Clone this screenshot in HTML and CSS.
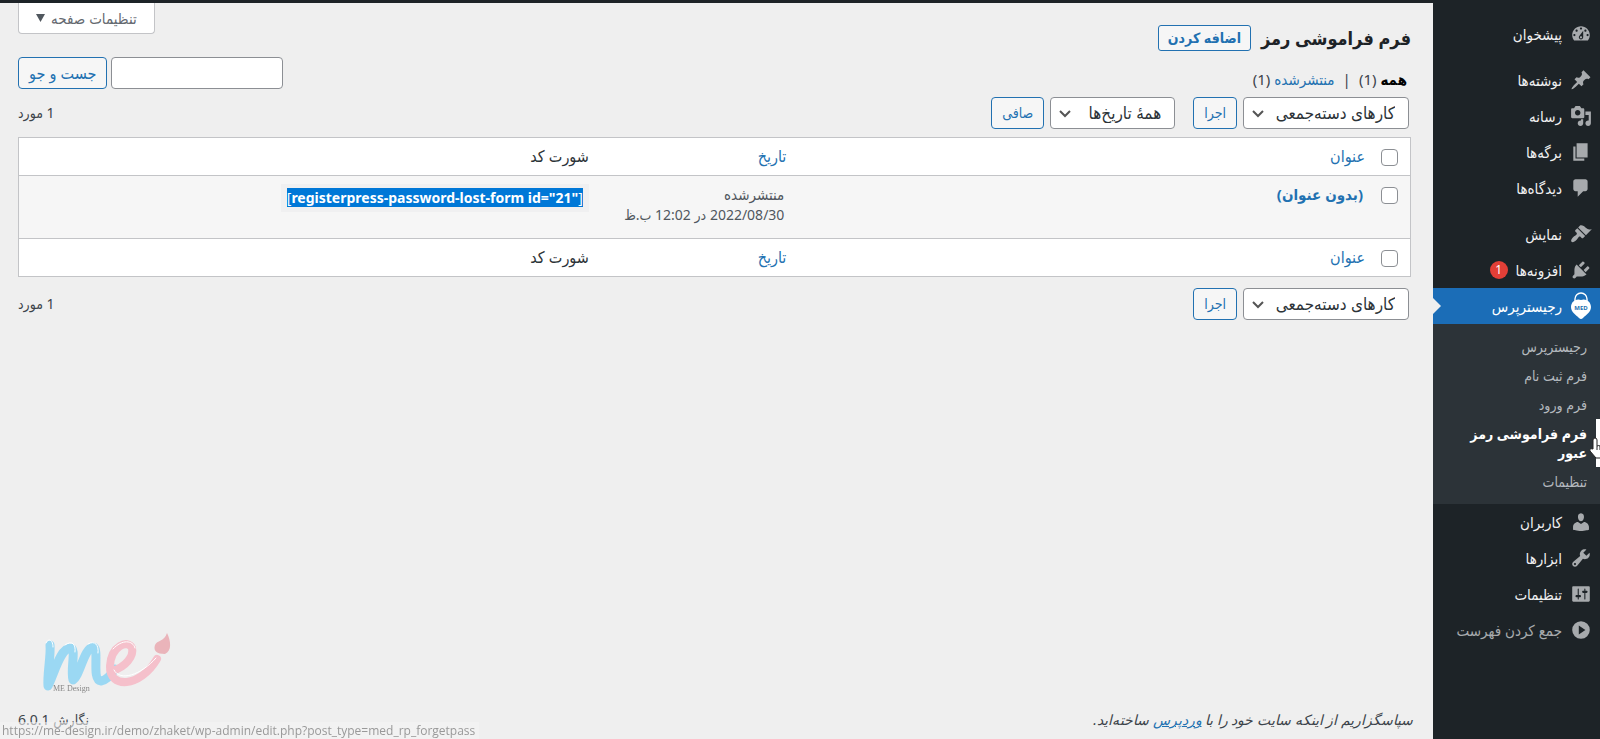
FILE: index.html
```html
<!DOCTYPE html>
<html lang="fa" dir="rtl">
<head>
<meta charset="utf-8">
<title>فرم فراموشی رمز</title>
<link rel="stylesheet" href="styles.css">
</head>
<body>
<div class="topbar"></div>
<div class="shell">
  <nav class="menu">
    <a class="item" href="#"><svg class="icon" viewBox="0 0 20 20"><path d="M3.76 16h12.48c1.1-1.37 1.76-3.11 1.76-5 0-4.42-3.58-8-8-8s-8 3.58-8 8c0 1.89.66 3.63 1.76 5zM10 4c.55 0 1 .45 1 1s-.45 1-1 1-1-.45-1-1 .45-1 1-1zM6 6c.55 0 1 .45 1 1s-.45 1-1 1-1-.45-1-1 .45-1 1-1zm8 0c.55 0 1 .45 1 1s-.45 1-1 1-1-.45-1-1 .45-1 1-1zm-5.37 5.55L12 7v6c0 1.1-.9 2-2 2s-2-.9-2-2c0-.57.24-1.08.63-1.45zM4 10c.55 0 1 .45 1 1s-.45 1-1 1-1-.45-1-1 .45-1 1-1zm12 0c.55 0 1 .45 1 1s-.45 1-1 1-1-.45-1-1 .45-1 1-1zm-5 3c0-.55-.45-1-1-1s-1 .45-1 1 .45 1 1 1 1-.45 1-1z"/></svg>پیشخوان</a>
    <div class="gap"></div>
    <a class="item" href="#"><svg class="icon" viewBox="0 0 20 20"><path d="M10.44 3.02l1.82-1.82 6.36 6.35-1.83 1.82c-1.05-.68-2.48-.57-3.41.36l-.75.75c-.92.93-1.04 2.35-.35 3.41l-1.83 1.82-2.41-2.41-2.8 2.79c-.42.42-3.38 2.71-3.8 2.29s1.86-3.39 2.28-3.81l2.79-2.79L4.1 9.36l1.83-1.82c1.05.69 2.48.57 3.4-.36l.75-.75c.93-.92 1.05-2.35.36-3.41z"/></svg>نوشته‌ها</a>
    <a class="item" href="#"><svg class="icon" viewBox="0 0 20 20"><path d="M13 11V4c0-.55-.45-1-1-1h-1.67L9 1H5L3.67 3H2c-.55 0-1 .45-1 1v7c0 .55.45 1 1 1h10c.55 0 1-.45 1-1zM7 4.5c1.38 0 2.5 1.12 2.5 2.5S8.38 9.5 7 9.5 4.5 8.38 4.5 7 5.62 4.5 7 4.5zM14 6h5v10.5c0 1.38-1.12 2.5-2.5 2.5S14 17.88 14 16.5s1.12-2.5 2.5-2.5c.17 0 .34.02.5.05V9h-3V6zm-4 8.05V13h2v3.5c0 1.38-1.12 2.5-2.5 2.5S7 17.88 7 16.5 8.12 14 9.5 14c.17 0 .34.02.5.05z"/></svg>رسانه</a>
    <a class="item" href="#"><svg class="icon" viewBox="0 0 20 20"><path d="M6 15V2h10v13H6zm-1 1h8v2H3V5h2v11z"/></svg>برگه‌ها</a>
    <a class="item" href="#"><svg class="icon" viewBox="0 0 20 20"><path d="M5 2h9c1.1 0 2 .9 2 2v7c0 1.1-.9 2-2 2h-2l-5 5v-5H5c-1.1 0-2-.9-2-2V4c0-1.1.9-2 2-2z"/></svg>دیدگاه‌ها</a>
    <div class="gap"></div>
    <a class="item" href="#"><svg class="icon" viewBox="0 0 20 20"><path d="M14.48 11.06L7.41 3.99l1.5-1.5c.5-.56 2.3-.47 3.51.32 1.21.8 1.43 1.28 2.91 2.1 1.18.64 2.45 1.26 4.45.85zm-.71.71L6.7 4.7 4.93 6.47c-.39.39-.39 1.02 0 1.41l1.06 1.06c.39.39.39 1.03 0 1.42-.6.6-1.43 1.11-2.21 1.69-.35.26-.7.53-1.01.84C1.43 14.23.4 16.08 1.4 17.07c.99 1 2.84-.03 4.18-1.36.31-.31.58-.66.85-1.02.57-.78 1.08-1.61 1.69-2.21.39-.39 1.02-.39 1.41 0l1.06 1.06c.39.39 1.02.39 1.41 0z"/></svg>نمایش</a>
    <a class="item" href="#"><svg class="icon" viewBox="0 0 20 20"><path d="M13.11 4.36L9.87 7.6 8 5.73l3.24-3.24c.35-.34 1.05-.2 1.56.32.52.51.66 1.21.31 1.55zm-8 1.77l.91-1.12 9.01 9.01-1.19.84c-.71.71-2.63 1.16-3.82 1.16H6.14L4.9 17.26c-.59.59-1.54.59-2.12 0-.59-.58-.59-1.53 0-2.12l1.24-1.24v-3.88c0-1.13.4-3.19 1.09-3.89zm7.26 3.97l3.24-3.24c.34-.35 1.04-.21 1.55.31.52.51.66 1.21.31 1.55l-3.24 3.25z"/></svg>افزونه‌ها<span class="count">1</span></a>
    <a class="item current" href="#"><svg class="icon badge" viewBox="0 0 22 28"><path d="M5 9V7a6 6 0 0 1 12 0v2" fill="none" stroke="#fff" stroke-width="1.4"/><path d="M11 8C7 6 1 9 1 15c0 5 5 8 8 11q2 2 4 0c3-3 8-6 8-11 0-6-6-9-10-7z"/><text x="11" y="18" text-anchor="middle">MED</text></svg>رجیسترپرس</a>
    <div class="submenu">
      <a class="sub" href="#">رجیسترپرس</a>
      <a class="sub" href="#">فرم ثبت نام</a>
      <a class="sub" href="#">فرم ورود</a>
      <a class="sub active" href="#">فرم فراموشی رمز عبور</a>
      <a class="sub" href="#">تنظیمات</a>
    </div>
    <a class="item" href="#"><svg class="icon" viewBox="0 0 20 20"><path d="M10 9.25c-2.27 0-2.73-3.44-2.73-3.44C7 4.02 7.82 2 9.97 2c2.16 0 2.98 2.02 2.71 3.81 0 0-.41 3.44-2.68 3.44zm0 2.57L12.72 10c2.39 0 4.52 2.33 4.52 4.53v2.49s-3.65 1.13-7.24 1.13c-3.65 0-7.24-1.13-7.24-1.13v-2.49c0-2.25 1.94-4.48 4.47-4.48z"/></svg>کاربران</a>
    <a class="item" href="#"><svg class="icon" viewBox="0 0 20 20"><path d="M16.68 9.77c-1.34 1.34-3.3 1.67-4.95.99l-5.41 6.52c-.99.99-2.59.99-3.58 0s-.99-2.59 0-3.57l6.52-5.42c-.68-1.65-.35-3.61.99-4.95 1.28-1.28 3.12-1.62 4.72-1.06l-2.89 2.89 2.82 2.82 2.86-2.87c.53 1.58.18 3.39-1.08 4.65zM3.81 16.21c.4.39 1.04.39 1.43 0 .4-.4.4-1.04 0-1.43-.39-.4-1.03-.4-1.43 0-.39.39-.39 1.03 0 1.43z"/></svg>ابزارها</a>
    <a class="item" href="#"><svg class="icon" viewBox="0 0 20 20"><path d="M18 16V4c0-.55-.45-1-1-1H3c-.55 0-1 .45-1 1v12c0 .55.45 1 1 1h14c.55 0 1-.45 1-1zM8 11h1c.55 0 1 .45 1 1s-.45 1-1 1H8v1.5c0 .28-.22.5-.5.5s-.5-.22-.5-.5V13H6c-.55 0-1-.45-1-1s.45-1 1-1h1V5.5c0-.28.22-.5.5-.5s.5.22.5.5V11zm5-2h-1c-.55 0-1-.45-1-1s.45-1 1-1h1V5.5c0-.28.22-.5.5-.5s.5.22.5.5V7h1c.55 0 1 .45 1 1s-.45 1-1 1h-1v5.5c0 .28-.22.5-.5.5s-.5-.22-.5-.5V9z"/></svg>تنظیمات</a>
    <button class="item collapse" type="button"><svg class="icon" viewBox="0 0 20 20"><path fill-rule="evenodd" d="M10 2a8 8 0 1 0 0 16 8 8 0 0 0 0-16zM8 6l6 4-6 4z"/></svg>جمع کردن فهرست</button>
  </nav>

  <main class="content">
    <header class="head">
      <div class="heading">
        <h1>فرم فراموشی رمز</h1>
        <a class="add" href="#">اضافه کردن</a>
      </div>
      <button class="screen" type="button">تنظیمات صفحه<svg class="tri" viewBox="0 0 9 8"><path d="M0 0h9L4.5 8z"/></svg></button>
    </header>

    <div class="filters">
      <div class="views"><a class="all" href="#">همه</a> <span>(1)</span><span class="bar">|</span><a href="#">منتشرشده</a> <span>(1)</span></div>
      <form class="search">
        <input class="field" type="search" aria-label="جست و جو">
        <button class="btn find" type="button">جست و جو</button>
      </form>
    </div>

    <div class="tablenav">
      <div class="actions">
        <select class="pick bulk" aria-label="کارهای دسته‌جمعی"><option>کارهای دسته‌جمعی</option></select>
        <button class="btn" type="button">اجرا</button>
        <select class="pick dates" aria-label="همهٔ تاریخ‌ها"><option>همهٔ تاریخ‌ها</option></select>
        <button class="btn" type="button">صافی</button>
      </div>
      <span class="total">1 مورد</span>
    </div>

    <table class="list">
      <thead>
        <tr><th class="check"><input type="checkbox" aria-label="گزینش همه"></th><th class="title"><a href="#">عنوان</a></th><th class="date"><a href="#">تاریخ</a></th><th>شورت کد</th></tr>
      </thead>
      <tbody>
        <tr><td class="check"><input type="checkbox" aria-label="(بدون عنوان)"></td><td><a class="name" href="#">(بدون عنوان)</a></td><td class="when"><span class="state">منتشرشده</span><br>2022/08/30 در 12:02 ب.ظ</td><td><code dir="ltr"><mark>[<b>registerpress-password-lost-form id="21"</b>]</mark></code></td></tr>
      </tbody>
      <tfoot>
        <tr><th class="check"><input type="checkbox" aria-label="گزینش همه"></th><th><a href="#">عنوان</a></th><th><a href="#">تاریخ</a></th><th>شورت کد</th></tr>
      </tfoot>
    </table>

    <div class="tablenav lower">
      <div class="actions">
        <select class="pick bulk" aria-label="کارهای دسته‌جمعی"><option>کارهای دسته‌جمعی</option></select>
        <button class="btn" type="button">اجرا</button>
      </div>
      <span class="total">1 مورد</span>
    </div>

    <footer class="foot">
      <em>سپاسگزاریم از اینکه سایت خود را با <a href="#">وردپرس</a> ساخته‌اید.</em>
      <span>نگارش 6.0.1</span>
    </footer>
  </main>
</div>

<svg class="logo" viewBox="0 0 132 62">
  <g fill="none" stroke-linecap="round" stroke-linejoin="round">
    <path d="M8 13C9 24 5 42 6 54C13 40 18 17 28 16C35 16 28 36 31 48C38 44 42 16 51 15C58 16 49 48 59 49C65 48 69 43 73 37" stroke="#9bd8f3" stroke-width="9"/>
    <path d="M70 39C84 35 92 24 90 16C86 7 69 14 68 34C67 57 98 56 115 27" stroke="#f5c0cb" stroke-width="8"/>
    <path d="M4 11C6 6 11 7 11 15M23 13C30 8 34 12 33 20M46 12C53 8 57 13 56 21M71 17C80 7 91 8 93 16M72 38C78 50 99 43 114 26" stroke="#fff" stroke-width="1"/>
  </g>
  <path d="M125 1C129 9 130 19 123 22C115 22 111 19 113 13C115 8 122 10 125 1z" fill="#eab4ba"/>
  <text x="11" y="59">ME Design</text>
</svg>
<div class="status" dir="ltr">https://me-design.ir/demo/zhaket/wp-admin/edit.php?post_type=med_rp_forgetpass</div>
<svg class="cursor" viewBox="0 0 18 22"><path d="M5 12V3q0-2 2-2t2 2v6q2-1 3 0 2-1 3 1 3-1 3 2v9H8L2 14q-1-3 3-2z" fill="#fff" stroke="#222"/><path d="M9 9v4m3-4v4m3-3v3" stroke="#222"/></svg>
</body>
</html>
```
FILE: styles.css
```css
* { box-sizing: border-box; }
body {
  margin: 0;
  min-height: 100vh;
  display: flex;
  flex-direction: column;
  background: #efefef;
  color: #3c434a;
  font: 14px/20px "Noto Sans", "DejaVu Sans Condensed", "DejaVu Sans", sans-serif;
}
a { color: #2271b1; text-decoration: none; }
button, input, select { font: inherit; margin: 0; }
.topbar { height: 3px; background: #1d2327; }
.shell { flex: 1; display: flex; }

.menu { width: 167px; flex: none; padding-top: 13px; background: #1d2327; }
.gap { height: 10px; }
.item {
  display: flex;
  align-items: center;
  gap: 8px;
  width: 100%;
  height: 36px;
  padding: 0 8px;
  border: 0;
  background: none;
  color: #f0f0f1;
  font-size: 15px;
}
.icon { width: 22px; height: 22px; flex: none; fill: #a7aaad; }
.badge { height: 28px; fill: #fff; overflow: visible; }
.badge text { font: bold 6px "Open Sans", sans-serif; fill: #2271b1; direction: ltr; }
.count {
  width: 18px;
  height: 18px;
  border-radius: 9px;
  background: #e33f37;
  color: #fff;
  font-size: 12px;
  line-height: 18px;
  text-align: center;
}
.current { position: relative; background: #1b6db7; color: #fff; }
.current::after {
  content: "";
  position: absolute;
  left: 0;
  top: 10px;
  border: 8px solid transparent;
  border-left-color: #efefef;
  border-right: 0;
}
.collapse { color: #a7aaad; cursor: pointer; }
.submenu { padding: 8px 0; background: #2c3338; }
.sub {
  display: block;
  padding: 5px 13px;
  color: #b4b9be;
  font-size: 14px;
  line-height: 19px;
}
.sub.active { color: #fff; font-weight: bold; box-shadow: inset -4px 0 0 #fff; }

.content { flex: 1; display: flex; flex-direction: column; padding: 0 20px 9px 18px; }
.head { display: flex; justify-content: space-between; align-items: flex-start; padding-right: 2px; }
.heading { display: flex; align-items: center; gap: 10px; padding-top: 18px; }
h1 { margin: 0; color: #1d2327; font-size: 18px; line-height: 34px; font-weight: bold; }
.add {
  padding: 2px 9px;
  border: 1px solid #2271b1;
  border-radius: 3px;
  background: #f6f6f6;
  font-weight: bold;
}
.screen {
  display: flex;
  align-items: center;
  gap: 6px;
  height: 31px;
  padding: 0 17px;
  border: 1px solid #c3c4c7;
  border-top: 0;
  border-radius: 0 0 4px 4px;
  background: #fff;
  color: #646970;
  font-size: 15px;
}
.tri { width: 9px; height: 8px; fill: #50575e; }

.filters { display: flex; justify-content: space-between; align-items: flex-start; padding-right: 2px; }
.views { padding: 14px 4px 0 0; font-size: 15px; }
.views .all { color: #000; font-weight: bold; }
.bar { margin: 0 8px; }
.search { display: flex; gap: 4px; padding-top: 2px; }
.field, .pick, .btn { height: 32px; border-radius: 4px; }
.field { width: 172px; border: 1px solid #8c8f94; background: #fff; }
.btn { padding: 0 10px; border: 1px solid #2271b1; background: #f6f6f6; color: #2271b1; }
.find { font-size: 16px; }
.pick {
  appearance: none;
  padding: 0 13px;
  border: 1px solid #8c8f94;
  color: #2c3338;
  font-size: 17px;
  background: #fff url("data:image/svg+xml,%3Csvg xmlns='http://www.w3.org/2000/svg' viewBox='0 0 12 8'%3E%3Cpath d='M1 1l5 5 5-5' fill='none' stroke='%23555' stroke-width='2'/%3E%3C/svg%3E") no-repeat 8px 12px / 12px 8px;
}
.bulk { width: 166px; }
.dates { width: 125px; margin-right: 12px; }
.tablenav { display: flex; justify-content: space-between; align-items: center; margin-top: 8px; padding-right: 2px; }
.lower { margin-top: 11px; }
.actions { display: flex; gap: 6px; padding-right: 2px; }

.list {
  margin: 8px 2px 0 0;
  table-layout: fixed;
  border-collapse: separate;
  border-spacing: 0;
  border: 1px solid #c3c4c7;
  background: #fff;
}
.list th, .list td { text-align: right; vertical-align: top; font-weight: normal; }
.list th { height: 37px; padding: 8px; color: #2c3338; font-size: 16px; }
.list td { height: 64px; padding: 8px 10px; background: #f6f6f6; border: solid #c3c4c7; border-width: 1px 0; }
.list .check { width: 37px; padding: 11px 12px 0 0; }
.list .title { width: 41.6%; }
.list .date { width: 14.2%; }
.check input {
  appearance: none;
  display: block;
  width: 17px;
  height: 17px;
  border: 1px solid #8c8f94;
  border-radius: 4px;
  background: #fff;
}
.name { font-size: 15px; font-weight: bold; }
.when { color: #50575e; white-space: nowrap; }
.state { font-size: 15px; }
.list td:last-child { padding: 8px; }
code { display: inline-block; padding: 4px 6px; background: #f0f0f1; font: inherit; }
mark { background: #0078d7; color: #fff; }

.foot { display: flex; justify-content: space-between; margin-top: auto; }
.foot a { text-decoration: underline; }
.logo { position: fixed; left: 42px; top: 632px; width: 132px; height: 62px; direction: ltr; }
.logo text { font: 8px "Liberation Serif", serif; fill: #888; }
.status {
  position: fixed;
  left: 0;
  bottom: 0;
  padding: 0 4px 0 2px;
  background: rgba(244, 244, 244, .6);
  color: #999;
  font: 12px/17px "Open Sans", sans-serif;
}
.cursor { position: fixed; right: -6px; top: 437px; width: 18px; height: 22px; }
```
